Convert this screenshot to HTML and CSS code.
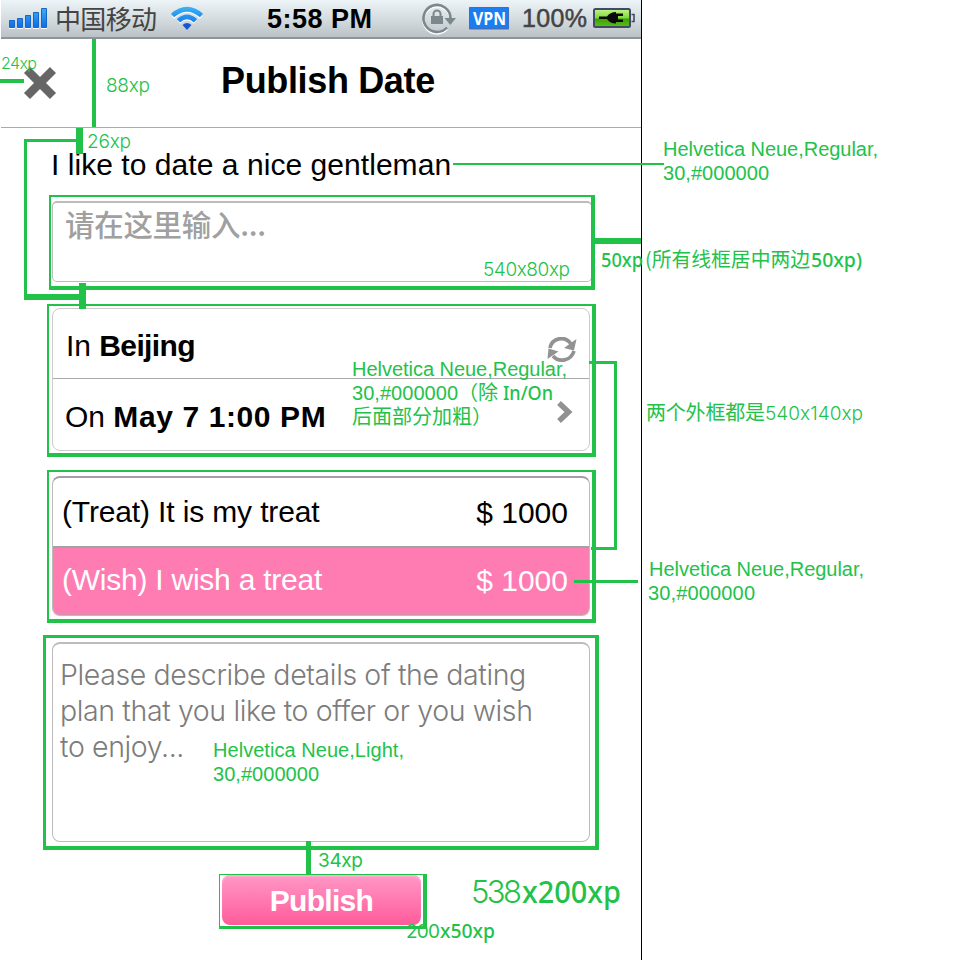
FILE: index.html
```
<!DOCTYPE html>
<html lang="en">
<head>
<meta charset="utf-8">
<title>Publish Date</title>
<link rel="stylesheet" href="styles.css">
</head>
<body>
<main class="phone">
  <header class="status">
    <svg class="status-art" width="640" height="37" viewBox="1 0 640 37">
      <defs>
        <linearGradient id="blue" x1="0" y1="7" x2="0" y2="30" gradientUnits="userSpaceOnUse"><stop offset="0" stop-color="#38b4f5"/><stop offset="1" stop-color="#0b61e8"/></linearGradient>
        <linearGradient id="green" x1="0" y1="0" x2="0" y2="1"><stop offset="0" stop-color="#c4f58c"/><stop offset=".5" stop-color="#7ed83a"/><stop offset=".55" stop-color="#3f9d0b"/><stop offset="1" stop-color="#58c414"/></linearGradient>
      </defs>
      <g fill="#fff"><path d="M9 27h6v2H9zM17 27h6v2h-6zM25 27h6v2h-6zM33 27h6v2h-6zM41 27h6v2h-6z"/></g>
      <g fill="url(#blue)" stroke="#1767c8" stroke-width="1"><path d="M9.500 20.500h5v7h-5zM17.500 18.500h5v9h-5zM25.500 15.500h5v12h-5zM33.500 12.500h5v15h-5zM41.500 8.500h5v19h-5z"/></g>
      <g fill="none" stroke="#fff" stroke-width="3.500" transform="translate(0 1.500)"><path d="M173 16Q187 3 201 16M179 21Q187 13 195 21"/></g>
      <g fill="none" stroke="url(#blue)" stroke-width="4.600"><path d="M172.500 15.500Q187 3 201.500 15.500M178.500 20.800Q187 13 195.500 20.800"/></g>
      <path d="M182.500 25Q187 21 191.500 25L187 30z" fill="#1557d8"/>
      <g fill="none" stroke="#fff" stroke-width="2.500" transform="translate(0 1)"><path d="M447 28A13.500 13.500 0 1 1 450.500 18"/></g>
      <path d="M447 27.500A13.500 13.500 0 1 1 450.500 18" fill="none" stroke="#7b888c" stroke-width="2.600"/>
      <path d="M444.500 18h11.500l-5.700 7z" fill="#7b888c"/>
      <path d="M431 16h12v8h-12z" fill="#7b888c"/><path d="M433.500 17v-3a3.500 3.500 0 0 1 7 0v3" fill="none" stroke="#7b888c" stroke-width="2"/>
      <rect x="469" y="7.500" width="40" height="22" rx="1" fill="#1b7df1"/><path d="M469.500 7.500h39v21h-39z" fill="none" stroke="#3b6fc0"/>
      <rect x="594" y="9" width="36" height="18" rx="1.500" fill="url(#green)" stroke="#424a68" stroke-width="2"/>
      <path d="M631.500 14.500h2.500v7h-2.500" fill="none" stroke="#424a68" stroke-width="1.600"/>
      <path d="M599 16.500h8q3-4.500 9-4.500v1.500h7v2.500h-5v3.500h5v2.500h-7v1.500q-6 0-9-4.500h-8z" fill="#0a0a0a"/>
      <text x="55" y="28.500" textLength="102" class="carrier">中国移动</text>
      <text x="267" y="28" textLength="105" class="clock">5:58 PM</text>
      <text x="473" y="25" textLength="33" lengthAdjust="spacingAndGlyphs" class="vpn">VPN</text>
      <text x="522" y="27" textLength="65" class="percent">100%</text>
    </svg>
  </header>
  <nav class="nav">
    <svg class="close" width="34" height="34" viewBox="0 0 34 34"><path d="M4 4l26 26M30 4L4 30" stroke="#666" stroke-width="8.500"/></svg>
    <h1>Publish Date</h1>
  </nav>
  <section class="form">
    <p class="question">I like to date a nice gentleman</p>
    <div class="field answer">请在这里输入...</div>
    <div class="field place">
      <div class="row in"><span>In <b>Beijing</b></span>
        <svg width="30" height="26" viewBox="0 0 30 26"><g fill="none" stroke="#929292" stroke-width="3.700"><path d="M3 11C5 1 18-2 24 7M27 14C24 24 12 26 6 19"/></g><path d="M29.500 2L27 13.500 17 11zM.5 22L1.500 11.500l10 3z" fill="#929292"/></svg>
      </div>
      <div class="row on"><span>On <b>May 7 1:00 PM</b></span>
        <svg width="16" height="22" viewBox="0 0 16 22"><path d="M2 2l9.500 9L2 20" fill="none" stroke="#929292" stroke-width="5.500"/></svg>
      </div>
    </div>
    <div class="field cost">
      <div class="row treat"><span>(Treat) It is my treat</span><span class="price">$ 1000</span></div>
      <div class="row wish"><span>(Wish) I wish a treat</span><span class="price">$ 1000</span></div>
    </div>
    <div class="field details">Please describe details of the dating<br>plan that you like to offer or you wish<br>to enjoy...</div>
    <button class="publish">Publish</button>
  </section>
</main>
<svg class="notes" width="960" height="960" viewBox="0 0 960 960">
  <g class="lines">
    <path d="M0 79h24v4H0zM92 39h4v88h-4zM76 128h7v26h-7zM24 139h52v3H27v152h52v-11h7v26h-7v-9H24z"/>
    <path d="M453 163h211v2H453zM595 238h46v6h-46zM589 361h28v189h-26v-3h23V364h-25zM574 580h64v3h-64zM306 841h5v33h-5z"/>
    <path fill-rule="evenodd" d="M49 195h546v95H49zM51 197v89h540v-89z"/>
    <path fill-rule="evenodd" d="M47 304h549v153H47zM49 306v147h543V306z"/>
    <path fill-rule="evenodd" d="M47 470h549v153H47zM49 472v147h543V472z"/>
    <path fill-rule="evenodd" d="M43 635h556v215H43zM46 638v208h549V638z"/>
    <path fill-rule="evenodd" d="M219 874h208v55H219zM220 875v51h203v-51z"/>
  </g>
  <g class="note">
    <text class="light small" x="1" y="69" textLength="36">24xp</text>
    <text class="light" x="106" y="92" textLength="44">88xp</text>
    <text class="light" x="87" y="148" textLength="44">26xp</text>
    <text x="663" y="156" textLength="215">Helvetica Neue,Regular,</text>
    <text x="663" y="180" textLength="106">30,#000000</text>
    <text class="light" x="483" y="276" textLength="87">540x80xp</text>
    <text class="myriad" x="601" y="267" textLength="42" lengthAdjust="spacingAndGlyphs">50xp</text>
    <text class="cjk" x="645" y="267" textLength="165" lengthAdjust="spacingAndGlyphs">(所有线框居中两边</text>
    <text class="myriad" x="811" y="267" textLength="51" lengthAdjust="spacingAndGlyphs">50xp)</text>
    <text x="352" y="376" textLength="215">Helvetica Neue,Regular,</text>
    <text x="352" y="400" textLength="106">30,#000000</text>
    <text class="cjk" x="458" y="400" textLength="40">（除</text>
    <text class="myriad" x="503" y="400" textLength="50" lengthAdjust="spacingAndGlyphs">In/On</text>
    <text class="cjk" x="352" y="424">后面部分加粗）</text>
    <text class="cjk" x="646" y="420" textLength="119">两个外框都是</text>
    <text class="light" x="765" y="420" textLength="98">540x140xp</text>
    <text x="649" y="576" textLength="215">Helvetica Neue,Regular,</text>
    <text x="648" y="600" textLength="107">30,#000000</text>
    <text x="213" y="757" textLength="191">Helvetica Neue,Light,</text>
    <text x="213" y="781" textLength="106">30,#000000</text>
    <text class="light mid" x="318" y="867" textLength="45">34xp</text>
    <text class="light large" x="471" y="903" textLength="51">538</text>
    <text class="myriad large" x="522" y="903" textLength="99" lengthAdjust="spacingAndGlyphs">x200xp</text>
    <text class="light mid" x="406" y="938" textLength="34">200</text>
    <text class="myriad" x="440" y="938" textLength="55" lengthAdjust="spacingAndGlyphs">x50xp</text>
  </g>
</svg>
</body>
</html>
```
FILE: styles.css
```
* { box-sizing: border-box; }
body { margin: 0; width: 960px; height: 960px; overflow: hidden; position: relative; background: #fff; font-family: "Liberation Sans", "Noto Sans CJK SC", sans-serif; color: #000; }
.phone { width: 642px; height: 960px; padding-left: 1px; border-right: 1px solid #000; }
.status { height: 39px; background: linear-gradient(#edf4f7, #d5dde0 50%, #bac2c6); border-bottom: 2px solid #8d949a; }
.status-art { display: block; }
.carrier { font: 26px "Noto Sans CJK SC", sans-serif; fill: #444; }
.clock { font-size: 27px; font-weight: bold; }
.vpn { font: bold 18px "Open Sans", sans-serif; fill: #fff; }
.percent { font-size: 25px; fill: #444; stroke: #444; stroke-width: .5px; }
.nav { height: 89px; display: flex; border-bottom: 1px solid #f283b6; }
.close { margin: 27px 0 0 22px; }
.nav h1 { margin: 21px 0 0 164px; font-size: 36px; line-height: 42px; font-weight: bold; letter-spacing: -.35px; white-space: nowrap; }
.form { padding-left: 51px; display: flex; flex-direction: column; font-size: 30px; white-space: nowrap; }
.question { margin: 19px 0 0 -1px; height: 54px; line-height: 36px; letter-spacing: .05px; }
.field { border: 1px solid #bcbcbc; border-radius: 8px; }
.answer { width: 540px; height: 81px; border-top: 2px solid #bcbcbc; border-radius: 5px; padding-left: 12px; font-family: "Noto Sans CJK SC", sans-serif; font-weight: 500; font-size: 29.500px; letter-spacing: -.3px; line-height: 41px; color: #a0a0a0; }
.place { margin-top: 26px; width: 538px; height: 143px; border-color: #ccc; }
.row { display: flex; justify-content: space-between; line-height: 36px; }
.in { height: 70px; padding: 19px 12px 0 13px; border-bottom: 1px solid #aaa; }
.in b { letter-spacing: -.65px; }
.in svg { margin-top: 9px; }
.on { padding: 20px 16px 0 12px; }
.on b { letter-spacing: .6px; }
.on svg { margin-top: 2px; }
.cost { margin-top: 25px; width: 538px; height: 140px; border-top: 2px solid #a49da1; overflow: hidden; }
.treat { height: 70px; padding: 16px 21px 0 9px; border-bottom: 2px solid #a2a2a2; letter-spacing: -.14px; }
.wish { height: 67px; padding: 14px 21px 0 9px; background: #ff7cb2; color: #fff; box-shadow: inset 0 -2px 3px #d991ae; letter-spacing: -.24px; }
.price { letter-spacing: 0; padding-top: 1px; }
.details { margin-top: 26px; width: 538px; height: 200px; border-top: 2px solid #bcbcbc; padding: 13px 0 0 7px; font-family: Inter, sans-serif; font-weight: 300; font-size: 28.500px; letter-spacing: -.38px; line-height: 36px; color: #7c7c7c; }
.publish { margin: 33px 0 0 170px; width: 199px; height: 50px; padding: 0; border: 0; border-radius: 8px; background: linear-gradient(#ff98c6, #ff5b9a); box-shadow: inset 0 2px 1px #ffabd0; color: #fff; font: bold 30px/52px "Liberation Sans", sans-serif; letter-spacing: -.7px; }
.notes { position: absolute; left: 0; top: 0; }
.lines { fill: #22c24a; }
.note { fill: #22c24a; font-size: 20px; }
.light { font-family: Inter, sans-serif; font-weight: 300; font-size: 19px; font-feature-settings: "calt" 0; }
.small { font-size: 16px; }
.mid { font-weight: 400; }
.myriad { font-family: "Noto Sans", sans-serif; font-weight: 500; font-size: 20px; }
.cjk { font-family: "Noto Sans CJK SC", sans-serif; font-size: 20px; }
.large { font-size: 31px; }
```
